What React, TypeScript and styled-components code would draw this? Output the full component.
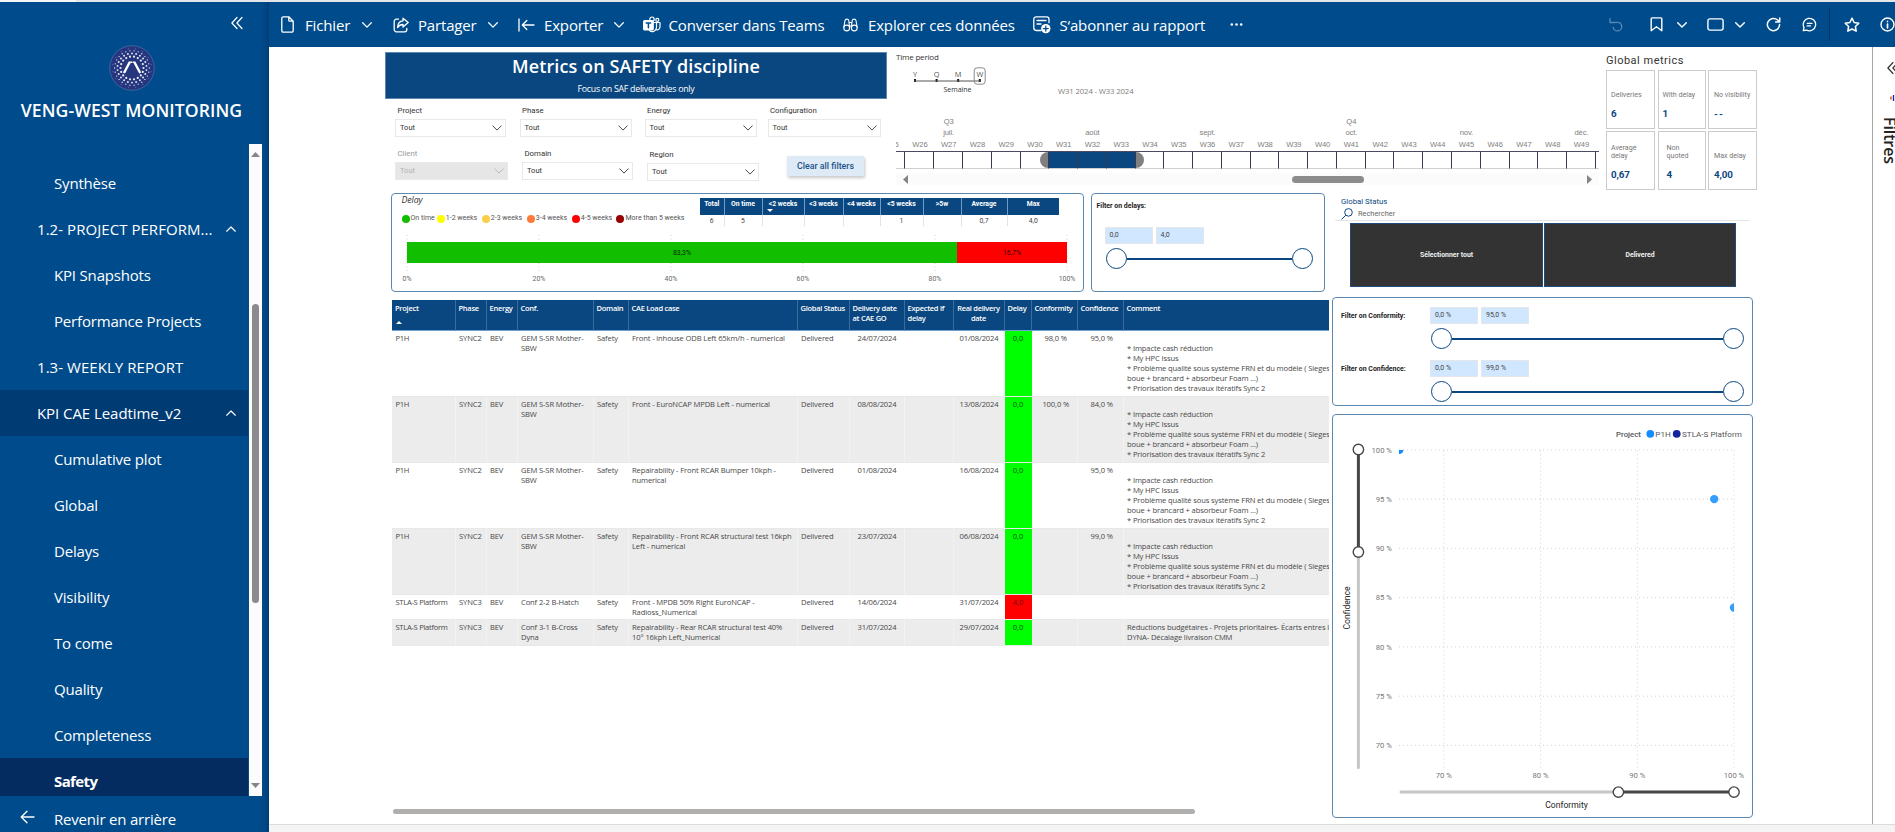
import React from "react";
import styled, { createGlobalStyle, css } from "styled-components";

const NAVY = "#0a4780";
const BRAND = "#004b8b";
const UI = '"Open Sans", "Noto Sans", sans-serif';
const DIN = 'Roboto, "Liberation Sans", sans-serif';

const GlobalStyle = createGlobalStyle`
  * { box-sizing: border-box; }
  html, body { margin: 0; padding: 0; background: #fff; overflow: hidden; }
  body { font-family: ${UI}; color: #333; }
`;

/* ---------- Page frame ---------- */

const Page = styled.div`
  width: 1895px;
  height: 832px;
  display: flex;
  flex-direction: column;
  overflow: hidden;
`;
const BrowserEdge = styled.div`
  height: 2px;
  flex: none;
  background: linear-gradient(90deg, #f4f5f7 76px, #e4e6ea 76px);
`;
const Shell = styled.div`
  flex: 1;
  min-height: 0;
  display: flex;
`;
const Main = styled.div`
  flex: 1;
  min-width: 0;
  display: flex;
  flex-direction: column;
`;
const Workspace = styled.div`
  flex: 1;
  min-height: 0;
  display: flex;
`;
const StatusBar = styled.div`
  height: 8px;
  flex: none;
  background: #f4f4f4;
  border-top: 1px solid #dcdcdc;
`;

/* ---------- Sidebar ---------- */

const Sidebar = styled.aside`
  width: 269px;
  flex: none;
  display: flex;
  flex-direction: column;
  background: ${BRAND};
  color: #fff;
  box-shadow: inset -6px 0 5px -4px rgba(0, 25, 70, 0.35);
`;
const CollapseRow = styled.div`
  height: 43px;
  padding: 14px 26px 0 0;
  display: flex;
  justify-content: flex-end;
`;
const LogoRow = styled.div`
  width: 263px;
  height: 46px;
  display: flex;
  justify-content: center;
`;
const AppTitle = styled.div`
  width: 263px;
  height: 53px;
  padding-top: 7px;
  text-align: center;
  font-weight: 600;
  font-size: 17.6px;
  line-height: 24px;
  letter-spacing: 0.08px;
  white-space: nowrap;
`;
const NavFrame = styled.div`
  height: 652px;
  width: 262px;
  display: flex;
  flex: none;
`;
const NavList = styled.nav`
  width: 248px;
  margin-right: 1px;
  padding-top: 16px;
  overflow: hidden;
`;
const NavItem = styled.div<{ $level: 1 | 2; $state?: "open" | "active" }>`
  height: 46px;
  display: flex;
  align-items: center;
  justify-content: space-between;
  padding: 0 12px 0 ${(p) => (p.$level === 1 ? 37 : 54)}px;
  font-size: 15px;
  letter-spacing: ${(p) => (p.$level === 1 ? 0.05 : -0.18)}px;
  white-space: nowrap;
  ${(p) =>
    p.$state === "open" &&
    css`
      background: #003b74;
      letter-spacing: -0.06px;
    `}
  ${(p) =>
    p.$state === "active" &&
    css`
      background: #042c60;
      font-weight: 700;
      letter-spacing: -0.6px;
    `}
`;
const NavScroll = styled.div`
  width: 13px;
  background: #fcfcfc;
  display: flex;
  flex-direction: column;
  align-items: center;
  padding: 8px 0;
`;
const NavThumb = styled.div`
  width: 7px;
  height: 299px;
  margin: 143px 0 auto;
  border-radius: 4px;
  background: #8b8b8b;
`;
const BackRow = styled.div`
  flex: 1;
  display: flex;
  align-items: flex-start;
  padding: 9px 0 0 20px;
  font-size: 15px;
  line-height: 28px;
  letter-spacing: -0.2px;
  white-space: nowrap;
  overflow: hidden;
  svg { margin: 5px 19px 0 0; }
`;

/* ---------- Toolbar ---------- */

const Toolbar = styled.header`
  height: 45px;
  flex: none;
  display: flex;
  align-items: center;
  background: ${BRAND};
  color: #fff;
  svg { flex: none; }
`;
const Command = styled.div<{ $gap: number }>`
  display: flex;
  align-items: center;
  margin-left: ${(p) => p.$gap}px;
`;
const CommandLabel = styled.span<{ $w: number; $before: number }>`
  width: ${(p) => p.$w}px;
  margin-left: ${(p) => p.$before}px;
  font-size: 15px;
  line-height: 22px;
  letter-spacing: -0.16px;
  white-space: nowrap;
`;
const Divider = styled.div`
  width: 1px;
  height: 33px;
  margin: 0 14px 0 12px;
  background: #043566;
`;

/* ---------- Report canvas ---------- */

const Canvas = styled.div`
  width: 1603px;
  flex: none;
  padding: 5px 0 0 116px;
  background: #fff;
`;
const TopBand = styled.div`
  height: 141px;
  display: flex;
`;
const FilterBlock = styled.section`
  width: 502px;
`;
const Banner = styled.div`
  height: 47px;
  background: ${NAVY};
  border: 1px solid #5c86ab;
  color: #fff;
  text-align: center;
`;
const BannerTitle = styled.h1`
  margin: 0;
  padding-top: 1px;
  font-size: 18px;
  line-height: 24px;
  font-weight: 600;
  letter-spacing: 0.09px;
`;
const BannerSub = styled.div`
  margin-top: 4px;
  font-size: 8.8px;
  line-height: 14px;
  letter-spacing: -0.27px;
  font-weight: 500;
`;
const SlicerRow = styled.div<{ $top: number; $left: number }>`
  display: flex;
  align-items: flex-start;
  padding: ${(p) => p.$top}px 0 0 ${(p) => p.$left}px;
`;
const Slicer = styled.div<{ $w: number; $gap: number; $drop?: number; $off?: boolean }>`
  width: ${(p) => p.$w}px;
  margin: ${(p) => p.$drop || 0}px ${(p) => p.$gap}px 0 0;
  font-family: ${DIN};
  color: ${(p) => (p.$off ? "#9a9a9a" : "#333")};
`;
const SlicerLabel = styled.div`
  padding-left: 2.5px;
  height: 14px;
  font-size: 7.8px;
  line-height: 11px;
`;
const SlicerBox = styled.div<{ $off?: boolean }>`
  height: 18px;
  display: flex;
  align-items: center;
  justify-content: space-between;
  padding: 0 3px 1px 4px;
  border: 1px solid #e9e9e9;
  background: ${(p) => (p.$off ? "#e6e6e6" : "#fff")};
  color: ${(p) => (p.$off ? "#b4b4b4" : "#333")};
  font-size: 7.5px;
`;
const ClearButton = styled.button`
  width: 77px;
  height: 20px;
  margin: 7.5px 0 0 4px;
  padding: 0;
  border: 0;
  background: #deebf7;
  box-shadow: 1px 2px 3px rgba(0, 0, 0, 0.22);
  color: #1c5288;
  font: 500 8.8px ${DIN};
  line-height: 18px;
`;

/* ---------- Timeline ---------- */

const Timeline = styled.section`
  width: 703px;
  margin-left: 9px;
  overflow: hidden;
`;
const TimelineTitle = styled.div`
  height: 14px;
  font-size: 8px;
  line-height: 9px;
  letter-spacing: -0.2px;
`;
const TimelineHead = styled.div`
  height: 49.5px;
  display: flex;
`;
const Granularity = styled.div`
  width: 74px;
  margin-left: 16px;
`;
const RangeText = styled.div`
  margin-left: 72px;
  padding-top: 19px;
  font-size: 7.8px;
  line-height: 12px;
  letter-spacing: -0.16px;
  color: #808080;
`;
const Weeks = styled.div`
  display: flex;
  margin-left: -19.3px;
`;
const Week = styled.div`
  width: 28.77px;
  flex: none;
  font-family: "Liberation Sans", sans-serif;
  font-size: 7.6px;
  line-height: 12.2px;
  text-align: center;
  color: #808080;
  letter-spacing: -0.1px;
`;
const WeekTier = styled.div`
  height: 11.7px;
`;
const WeekCell = styled.div<{ $on: boolean }>`
  height: 18px;
  border-top: 1.5px solid #4c4a60;
  border-bottom: 1px solid #cfcfd4;
  border-right: 1px solid #3b394f;
  background: ${(p) => (p.$on ? NAVY : "#fff")};
  display: flex;
`;
const RangeHandle = styled.span<{ $side: "start" | "end" }>`
  width: 8.5px;
  height: 16px;
  background: #808080;
  margin-left: ${(p) => (p.$side === "start" ? "auto" : "0")};
  border-radius: ${(p) => (p.$side === "start" ? "9px 0 0 9px" : "0 9px 9px 0")};
`;
const TimeScroll = styled.div`
  height: 12px;
  margin-top: 4.5px;
  padding: 0 7px;
  display: flex;
  align-items: center;
  background: #fbfbfb;
`;
const TimeThumb = styled.div`
  width: 72px;
  height: 7px;
  margin: 0 auto 0 380px;
  border-radius: 4px;
  background: #8c8c8c;
`;

/* ---------- Global metrics ---------- */

const Metrics = styled.section`
  width: 152px;
  margin-left: 7px;
  font-family: ${DIN};
`;
const MetricsTitle = styled.div`
  height: 18px;
  font-size: 11px;
  line-height: 17px;
  letter-spacing: 0.5px;
`;
const MetricGrid = styled.div`
  display: grid;
  grid-template-columns: 49px 48px 49px;
  grid-auto-rows: 59px;
  gap: 2px 2.5px;
`;
const MetricCard = styled.div<{ $left?: number }>`
  display: flex;
  flex-direction: column;
  justify-content: flex-end;
  padding: 0 0 8px ${(p) => p.$left ?? 4}px;
  border: 1px solid #cbcbcb;
  font-size: 7.1px;
  line-height: 8px;
  color: #777;
  white-space: nowrap;
`;
const MetricLabel = styled.span`
  white-space: pre;
`;
const MetricValue = styled.div<{ $empty: boolean }>`
  margin-top: 9px;
  font-size: 9.8px;
  line-height: 12px;
  font-weight: 700;
  letter-spacing: ${(p) => (p.$empty ? 1.2 : -0.1)}px;
  color: ${NAVY};
`;

/* ---------- Body ---------- */

const Body = styled.div`
  display: flex;
  margin-left: 6px;
`;
const LeftColumn = styled.div`
  width: 938px;
`;
const PanelRow = styled.div`
  display: flex;
  gap: 7px;
  margin-bottom: 8px;
`;
const Panel = styled.section<{ $w: number; $h: number }>`
  width: ${(p) => p.$w}px;
  height: ${(p) => p.$h}px;
  flex: none;
  border: 1px solid #5b88b3;
  border-radius: 4px;
  background: #fff;
  font-family: ${DIN};
`;
const DelayHead = styled.div`
  height: 38px;
  display: flex;
`;
const DelayInfo = styled.div`
  width: 308px;
  padding-left: 9.5px;
`;
const DelayTitle = styled.div`
  height: 18px;
  padding-top: 1px;
  font-size: 8.8px;
  line-height: 10px;
  font-style: italic;
  font-family: ${UI};
  letter-spacing: -0.1px;
`;
const Legend = styled.div`
  display: flex;
`;
const LegendItem = styled.span<{ $w: number; $c: string }>`
  width: ${(p) => p.$w}px;
  display: flex;
  align-items: center;
  gap: 1px;
  font-size: 7px;
  line-height: 13px;
  color: #555;
  white-space: nowrap;
  &::before {
    content: "";
    width: 8px;
    height: 8px;
    flex: none;
    border-radius: 50%;
    background: ${(p) => p.$c};
  }
`;
const SummaryTable = styled.table`
  width: 359px;
  height: 27px;
  margin-top: 4px;
  border-collapse: collapse;
  table-layout: fixed;
  font-size: 6.8px;
  line-height: 9px;
  text-align: center;
  th {
    height: 17px;
    padding: 1.5px 0 0;
    vertical-align: top;
    background: ${NAVY};
    color: #fff;
    font-weight: 700;
    border-right: 1px solid #6f9cc7;
  }
  td {
    height: 10px;
    padding: 2px 0 0;
    border-right: 1px solid #e3e3e3;
    color: #444;
  }
  th:last-child, td:last-child { border-right: 0; }
`;
const SortedHeader = styled.span`
  display: block;
  position: relative;
  &::after {
    content: "";
    position: absolute;
    left: 4px;
    top: 9px;
    border: 3px solid transparent;
    border-top-color: #fff;
    border-bottom: 0;
  }
`;
const SliderTitle = styled.div`
  font-size: 6.95px;
  line-height: 11px;
  font-weight: 700;
  color: #222;
  white-space: nowrap;
`;
const InputPair = styled.div`
  display: flex;
  gap: 3px;
`;
const RangeInput = styled.div`
  width: 48px;
  height: 17px;
  padding-left: 4px;
  border: 1px solid #e3e6ea;
  background: #d0e7ff;
  color: #444;
  font-size: 7px;
  line-height: 15px;
`;
const Track = styled.div<{ $w: number }>`
  width: ${(p) => p.$w}px;
  height: 19px;
  display: flex;
  align-items: center;
  &::before, &::after {
    content: "";
    width: 19px;
    height: 19px;
    border: 1.5px solid ${NAVY};
    border-radius: 50%;
    background: #fff;
  }
`;
const TrackLine = styled.div`
  flex: 1;
  height: 2px;
  background: ${NAVY};
`;
const DelaySlicer = styled.div`
  padding: 7px 0 0 4.5px;
`;
const DelayControls = styled.div`
  padding: 15px 0 0 8px;
  display: flex;
  flex-direction: column;
  gap: 5px;
  ${Track} { margin-left: 1px; }
`;
const RatioSlicer = styled.div<{ $top: number }>`
  display: flex;
  padding: ${(p) => p.$top}px 0 0 8px;
`;
const RatioName = styled.div`
  width: 89px;
  padding-top: 4px;
`;
const RatioControls = styled.div`
  display: flex;
  flex-direction: column;
  gap: 5px;
  ${Track} { margin-left: 1px; }
`;

/* ---------- Table ---------- */

const TableFrame = styled.div`
  width: 937px;
  height: 509px;
  margin-left: 1px;
  overflow: hidden;
`;
const DataTable = styled.table`
  width: 1020px;
  border-collapse: separate;
  border-spacing: 0;
  table-layout: fixed;
  font-size: 7.6px;
  line-height: 10.1px;
  letter-spacing: -0.13px;
  color: #484848;
`;
const HeadCell = styled.th<{ $align?: string }>`
  height: 31px;
  padding: 3px 3px 0;
  vertical-align: top;
  text-align: ${(p) => p.$align || "left"};
  background: ${NAVY};
  color: #fff;
  font-weight: 600;
  font-size: 7.5px;
  letter-spacing: -0.28px;
  border-right: 1px solid #3c6c9b;
  border-bottom: 1px solid #6fa3d4;
  white-space: pre-line;
`;
const SortUp = styled.span`
  display: block;
  width: 0;
  margin: 8px 0 0 1px;
  border: 3px solid transparent;
  border-bottom-color: #fff;
  border-top: 0;
`;
const Row = styled.tr<{ $h: number; $alt: boolean }>`
  height: ${(p) => p.$h}px;
  background: ${(p) => (p.$alt ? "#ececec" : "#fff")};
`;
const Cell = styled.td<{ $align?: string; $fill?: string; $right?: number; $tight?: boolean }>`
  padding: 2px ${(p) => p.$right ?? 0}px 0 3.5px;
  vertical-align: top;
  text-align: ${(p) => p.$align || "left"};
  white-space: pre;
  border-right: 1px solid rgba(255, 255, 255, 0.35);
  border-bottom: 1px solid #e8e8e8;
  ${(p) =>
    p.$tight &&
    css`
      letter-spacing: -0.29px;
    `}
  ${(p) =>
    p.$fill &&
    css`
      background: ${p.$fill};
      color: ${p.$fill === "#ff0000" ? "#6e0808" : "#0a500a"};
      border-right: 0;
    `}
`;
const TableThumb = styled.div`
  width: 802px;
  height: 5px;
  margin-left: 2px;
  border-radius: 3px;
  background: #b0afad;
`;

/* ---------- Right column ---------- */

const RightColumn = styled.div`
  width: 421px;
  margin-left: 3px;
`;
const StatusSlicer = styled.section`
  height: 104px;
  padding: 3px 0 0 3px;
  font-family: ${DIN};
`;
const StatusTitle = styled.div`
  padding-left: 6px;
  font-size: 7.8px;
  line-height: 11px;
  color: ${NAVY};
`;
const SearchRow = styled.div`
  width: 415px;
  height: 14px;
  display: flex;
  align-items: center;
  gap: 5px;
  padding-left: 6px;
  border-bottom: 1px solid #e6e6e6;
  font-size: 7.4px;
  color: #666;
`;
const StatusTiles = styled.div`
  display: grid;
  grid-template-columns: 193px 192px;
  gap: 1px;
  margin: 2px 0 0 15px;
`;
const StatusTile = styled.div`
  height: 64px;
  display: flex;
  align-items: center;
  justify-content: center;
  background: #333;
  border: 1px solid #1d4c7d;
  color: #f0f0f0;
  font-size: 6.9px;
  font-weight: 700;
`;
const Stack = styled.div`
  display: flex;
  flex-direction: column;
  gap: 8px;
`;

/* ---------- Collapsed filter pane ---------- */

const FilterPane = styled.aside`
  width: 23px;
  flex: none;
  overflow: hidden;
  border-left: 1px solid #a6a6a6;
  display: flex;
  flex-direction: column;
  align-items: flex-start;
  padding: 14px 0 0 14px;
  svg { flex: none; }
`;
const PaneIcon = styled.div`
  height: 10px;
  margin: 18px 0 14px;
  display: flex;
`;
const PaneTitle = styled.div`
  margin-left: -8px;
  writing-mode: vertical-rl;
  font-size: 16px;
  line-height: 22px;
  font-weight: 600;
  color: #252423;
  letter-spacing: -0.1px;
`;

/* ---------- Icons ---------- */

type IconProps = { w?: number; h?: number; vb?: string; sw?: number; children: React.ReactNode; op?: number };
const Icon = ({ w = 16, h = 16, vb = "0 0 16 16", sw = 1.3, op = 1, children }: IconProps) => (
  <svg width={w} height={h} viewBox={vb} fill="none" stroke="currentColor" strokeWidth={sw} strokeLinecap="round" strokeLinejoin="round" opacity={op}>
    {children}
  </svg>
);
const Chevron = ({ up, w = 10, sw = 1.3 }: { up?: boolean; w?: number; sw?: number }) => (
  <Icon w={w} h={w * 0.6} vb="0 0 10 6" sw={sw}>
    <path d={up ? "M.7 5.2 5 1l4.3 4.2" : "M.7.8 5 5.1 9.3.8"} />
  </Icon>
);
const DoubleChevron = () => (
  <Icon w={12} h={14} vb="0 0 12 14" sw={1.2}>
    <path d="M6 1.5.9 7 6 12.5M11 1.5 5.9 7l5.1 5.5" />
  </Icon>
);
const Triangle = ({ d }: { d: string }) => (
  <svg width="9" height="9" viewBox="0 0 9 9"><path d={d} fill="#858585" /></svg>
);

const Logo = () => {
  const dots: React.ReactNode[] = [];
  [[11.5, 18, 1.1], [14.6, 22, 0.95], [17.3, 26, 0.65], [19.4, 16, 0.4]].forEach(([r, n, s], ring) => {
    for (let i = 0; i < n; i++) {
      const a = ((i + (ring % 2) / 2) / n) * Math.PI * 2;
      dots.push(<circle key={`${ring}-${i}`} cx={23 + r * Math.cos(a)} cy={23 + r * Math.sin(a)} r={s} />);
    }
  });
  return (
    <svg width="46" height="46" viewBox="0 0 46 46">
      <circle cx="23" cy="23" r="22.3" fill="#25367f" stroke="#4f74ae" strokeWidth=".7" />
      <g fill="#fff" opacity=".9">{dots}</g>
      <path d="M15 28 20.8 17M25.3 17 31.2 28" stroke="#fff" strokeWidth="2.4" />
      <path d="M20 17.2h3M23.5 17.2h2.4" stroke="#fff" strokeWidth="1.4" />
    </svg>
  );
};

/* ---------- Data ---------- */

const NAV: { label: string; level: 1 | 2; state?: "open" | "active"; arrow?: boolean }[] = [
  { label: "Synthèse", level: 2 },
  { label: "1.2- PROJECT PERFORM...", level: 1, arrow: true },
  { label: "KPI Snapshots", level: 2 },
  { label: "Performance Projects", level: 2 },
  { label: "1.3- WEEKLY REPORT", level: 1 },
  { label: "KPI CAE Leadtime_v2", level: 1, state: "open", arrow: true },
  { label: "Cumulative plot", level: 2 },
  { label: "Global", level: 2 },
  { label: "Delays", level: 2 },
  { label: "Visibility", level: 2 },
  { label: "To come", level: 2 },
  { label: "Quality", level: 2 },
  { label: "Completeness", level: 2 },
  { label: "Safety", level: 2, state: "active" },
];

const WEEKS = Array.from({ length: 26 }, (_, i) => 25 + i);
const MONTHS: Record<number, string> = { 27: "juil.", 32: "août", 36: "sept.", 41: "oct.", 45: "nov.", 49: "déc." };
const QUARTERS: Record<number, string> = { 27: "Q3", 41: "Q4" };

const LEGEND: [string, string, number][] = [
  ["On time", "#12be00", 35.3],
  ["1-2 weeks", "#ffff00", 45],
  ["2-3 weeks", "#fbcf4b", 45],
  ["3-4 weeks", "#ff7a3c", 45],
  ["4-5 weeks", "#ff0000", 44.7],
  ["More than 5 weeks", "#960000", 70],
];

const SUMMARY: [string, string, number][] = [
  ["Total", "6", 24],
  ["On time", "5", 38],
  ["<2 weeks", "", 42],
  ["<3 weeks", "", 39],
  ["<4 weeks", "", 37],
  ["<5 weeks", "1", 43],
  [">5w", "", 38],
  ["Average", "0,7", 46],
  ["Max", "4,0", 52],
];

const COLUMNS: { title: string; w: number; align?: string }[] = [
  { title: "Project", w: 63.5 },
  { title: "Phase", w: 31 },
  { title: "Energy", w: 31 },
  { title: "Conf.", w: 76 },
  { title: "Domain", w: 35 },
  { title: "CAE Load case", w: 169 },
  { title: "Global Status", w: 52 },
  { title: "Delivery date\nat CAE GO", w: 55 },
  { title: "Expected if\ndelay", w: 49 },
  { title: "Real delivery\ndate", w: 51, align: "center" },
  { title: "Delay", w: 27 },
  { title: "Conformity", w: 46 },
  { title: "Confidence", w: 46 },
  { title: "Comment", w: 288.5 },
];

const LONG_COMMENT =
  "\n* Impacte cash réduction\n* My HPC Issus\n* Problème qualité sous système FRN et du modèle ( Sieges\nboue + brancard + absorbeur Foam ...)\n* Priorisation des travaux itératifs Sync 2";

const ROWS = [
  { h: 65.5, v: ["P1H", "SYNC2", "BEV", "GEM S-SR Mother-\nSBW", "Safety", "Front - inhouse ODB Left 65km/h - numerical", "Delivered", "24/07/2024", "", "01/08/2024", "0,0", "98,0 %", "95,0 %", LONG_COMMENT] },
  { h: 66.5, v: ["P1H", "SYNC2", "BEV", "GEM S-SR Mother-\nSBW", "Safety", "Front - EuroNCAP MPDB Left - numerical", "Delivered", "08/08/2024", "", "13/08/2024", "0,0", "100,0 %", "84,0 %", LONG_COMMENT] },
  { h: 65.5, v: ["P1H", "SYNC2", "BEV", "GEM S-SR Mother-\nSBW", "Safety", "Repairability - Front RCAR Bumper 10kph -\nnumerical", "Delivered", "01/08/2024", "", "16/08/2024", "0,0", "", "95,0 %", LONG_COMMENT] },
  { h: 66.5, v: ["P1H", "SYNC2", "BEV", "GEM S-SR Mother-\nSBW", "Safety", "Repairability - Front RCAR structural test 16kph\nLeft - numerical", "Delivered", "23/07/2024", "", "06/08/2024", "0,0", "", "99,0 %", LONG_COMMENT] },
  { h: 25, v: ["STLA-S Platform", "SYNC3", "BEV", "Conf 2-2 B-Hatch", "Safety", "Front - MPDB 50% Right EuroNCAP -\nRadioss_Numerical", "Delivered", "14/06/2024", "", "31/07/2024", "4,0", "", "", ""] },
  { h: 25.5, v: ["STLA-S Platform", "SYNC3", "BEV", "Conf 3-1 B-Cross\nDyna", "Safety", "Repairability - Rear RCAR structural test 40%\n10° 16kph Left_Numerical", "Delivered", "31/07/2024", "", "29/07/2024", "0,0", "", "", "Réductions budgétaires - Projets prioritaires- Écarts entres les\nDYNA- Décalage livraison CMM"] },
];

/* ---------- Charts ---------- */

const DelayBar = () => (
  <svg width="690" height="58" viewBox="392 232 690 58" fontFamily="Roboto, sans-serif" fontSize="6.9" textAnchor="middle">
    {[0, 20, 40, 60, 80, 100].map((v) => {
      const x = 407 + v * 6.6;
      return (
        <g key={v}>
          <path d={`M${x} 235V272`} stroke="#cfcfcf" strokeDasharray="1 2.5" />
          <text x={x} y="281" fill="#666">{v}%</text>
        </g>
      );
    })}
    <rect x="407" y="242" width="550" height="21" fill="#12be00" />
    <rect x="957" y="242" width="110" height="21" fill="#ff0000" />
    <text x="682" y="255" fill="#062605">83,3%</text>
    <text x="1012" y="255" fill="#3a0303">16,7%</text>
  </svg>
);

const Scatter = () => (
  <svg width="419" height="402" viewBox="1333 414.5 419 402" fontFamily="Roboto, sans-serif" fontSize="7.7" fill="#777">
    <g fontSize="8.1" fill="#555">
      <text x="1616" y="436" fontWeight="500" fontSize="7.8">Project</text>
      <circle cx="1650.3" cy="433.3" r="3.9" fill="#118dff" />
      <text x="1655.3" y="436">P1H</text>
      <circle cx="1676.7" cy="433.3" r="3.9" fill="#12239e" />
      <text x="1682" y="436">STLA-S Platform</text>
    </g>
    {[100, 95, 90, 85, 80, 75, 70].map((v, i) => {
      const y = 449.4 + i * 49.25;
      return (
        <g key={v}>
          <path d={`M1399 ${y}H1734`} stroke="#d2d2d2" strokeDasharray="1 3" />
          <text x="1392" y={y + 2.6} textAnchor="end">{v} %</text>
        </g>
      );
    })}
    {[70, 80, 90, 100].map((v, i) => {
      const x = 1443.9 + i * 96.7;
      return (
        <g key={v}>
          <path d={`M${x} 450V768`} stroke="#d2d2d2" strokeDasharray="1 3" />
          <text x={x} y="777.6" textAnchor="middle">{v} %</text>
        </g>
      );
    })}
    <g fill="#118dff">
      <path d="M1399 449.4h4.400a4.200 4.200 0 0 1-4.400 4.200z" />
      <circle cx="1714.200" cy="498.600" r="4.200" opacity=".85" />
      <path d="M1734 602.900a4.200 4.200 0 0 0 0 8.400z" opacity=".85" />
    </g>
    <g fill="none" strokeLinecap="round" strokeWidth="3">
      <path d="M1358.400 552V767" stroke="#c8c6c4" />
      <path d="M1358.400 449V552" stroke="#484644" />
      <path d="M1401 791.600H1618" stroke="#c8c6c4" />
      <path d="M1618 791.600H1734" stroke="#484644" />
    </g>
    <g fill="#fff" stroke="#484644" strokeWidth="1.400">
      <circle cx="1358.400" cy="449" r="5.200" />
      <circle cx="1358.400" cy="551.500" r="5.200" />
      <circle cx="1618.400" cy="791.600" r="5.200" />
      <circle cx="1734" cy="791.600" r="5.200" />
    </g>
    <g fill="#252423" fontSize="8.600" textAnchor="middle">
      <text x="1566.500" y="807.600">Conformity</text>
      <text transform="translate(1350 607.500) rotate(-90)">Confidence</text>
    </g>
  </svg>
);

const GranularityScale = () => (
  <svg width="74" height="32" viewBox="912 66 74 32" fontFamily="Open Sans, sans-serif" fontSize="7.400" fill="#555" textAnchor="middle">
    {["Y", "Q", "M", "W"].map((c, i) => (
      <g key={c}>
        <text x={915 + i * 21.6} y="77.400">{c}</text>
        <rect x={914 + i * 21.6} y="79" width="2" height="3" fill="#111" />
      </g>
    ))}
    <path d="M914 81H980" stroke="#555" />
    <rect x="974.200" y="67.800" width="11" height="16.400" rx="3" fill="none" stroke="#8a8a8a" />
    <text x="957.500" y="92" fontSize="7" fill="#333">Semaine</text>
  </svg>
);

const slicer = (label: string, w: number, gap: number, drop = 0, off = false) => (
  <Slicer $w={w} $gap={gap} $drop={drop} $off={off} key={label}>
    <SlicerLabel>{label}</SlicerLabel>
    <SlicerBox $off={off}>
      Tout
      <Chevron w={10} sw={0.9} />
    </SlicerBox>
  </Slicer>
);

const metric = (label: string, value: string, left = 4) => (
  <MetricCard $left={left} key={label}>
    <MetricLabel>{label}</MetricLabel>
    <MetricValue $empty={value === "--"}>{value}</MetricValue>
  </MetricCard>
);

export default function App() {
  return (
    <Page>
      <GlobalStyle />
      <BrowserEdge />
      <Shell>
        <Sidebar>
          <CollapseRow><DoubleChevron /></CollapseRow>
          <LogoRow><Logo /></LogoRow>
          <AppTitle>VENG-WEST MONITORING</AppTitle>
          <NavFrame>
            <NavList>
              {NAV.map((n) => (
                <NavItem key={n.label} $level={n.level} $state={n.state}>
                  {n.label}
                  {n.arrow && <Chevron up w={10} sw={1.2} />}
                </NavItem>
              ))}
            </NavList>
            <NavScroll>
              <Triangle d="M0 5 4.5 0 9 5z" />
              <NavThumb />
              <Triangle d="M0 4h9L4.5 9z" />
            </NavScroll>
          </NavFrame>
          <BackRow>
            <Icon w={15} h={14} vb="0 0 15 14"><path d="M7 1.2 1.2 7 7 12.8M1.5 7H14" /></Icon>
            Revenir en arrière
          </BackRow>
        </Sidebar>

        <Main>
          <Toolbar>
            <Command $gap={12}>
              <Icon w={13} h={17} vb="0 0 13 17"><path d="M2.2.8h5.6l4.4 4.4v9.6a1.4 1.4 0 0 1-1.4 1.4H2.2A1.4 1.4 0 0 1 .8 14.8V2.2A1.4 1.4 0 0 1 2.2.8zM7.8.8v3.4a1 1 0 0 0 1 1h3.400" /></Icon>
              <CommandLabel $w={57} $before={11}>Fichier</CommandLabel>
              <Chevron />
            </Command>
            <Command $gap={20.5}>
              <Icon w={16} h={16}>
                <path d="M5.5 2.2H3.4A2.2 2.2 0 0 0 1.2 4.4v8.2a2.2 2.2 0 0 0 2.2 2.2h8.2a2.2 2.2 0 0 0 2.2-2.200v-1.300" />
                <path d="M10 1.2 15.2 5.6 10 10V7.5C7.5 7.4 6 8.4 4.5 10.5 4.7 6.5 6.5 4 10 3.800z" />
              </Icon>
              <CommandLabel $w={69.5} $before={9.5}>Partager</CommandLabel>
              <Chevron />
            </Command>
            <Command $gap={20.5}>
              <Icon w={17} h={14} vb="0 0 17 14"><path d="M1 1v12M8.8 2.5 4.3 7l4.5 4.5M4.5 7H16" /></Icon>
              <CommandLabel $w={69.5} $before={9}>Exporter</CommandLabel>
              <Chevron />
            </Command>
            <Command $gap={19}>
              <Icon w={18} h={17} vb="0 0 18 17" sw={1.2}>
                <circle cx="9" cy="3.2" r="2.2" /><circle cx="14.3" cy="3.9" r="1.5" />
                <path d="M12 6.5h5v4.3a3 3 0 0 1-3.4 3M6.5 14.5c2.8 2.6 7 .5 7-3.2V6.5H11" />
                <rect x=".6" y="4.5" width="9.6" height="9.4" rx="1" fill="currentColor" />
                <path d="M3.2 7h4.4M5.4 7v4.8" stroke={BRAND} strokeWidth="1.5" />
              </Icon>
              <CommandLabel $w={154} $before={8}>Converser dans Teams</CommandLabel>
            </Command>
            <Command $gap={20}>
              <Icon w={15} h={15} vb="0 0 15 15" sw={1.1}>
                <circle cx="3.7" cy="11" r="2.9" /><circle cx="11.3" cy="11" r="2.9" />
                <path d="M.9 10 2 3.5C2.3 1.7 5.5 1.7 5.8 3.5L6.6 10.5M14.1 10 13 3.5C12.7 1.7 9.5 1.7 9.2 3.5L8.4 10.5M6 5.5h3M6.500 9h2" />
              </Icon>
              <CommandLabel $w={147} $before={10.5}>Explorer ces données</CommandLabel>
            </Command>
            <Command $gap={17.5}>
              <Icon w={18} h={18} vb="0 0 18 18">
                <path d="M8 14.5H3.2A2.4 2.4 0 0 1 .8 12.1V3.2A2.4 2.4 0 0 1 3.2.8h10.4A2.4 2.4 0 0 1 16 3.2v3.5M4 4.5h9M4 8h4" />
                <circle cx="12.8" cy="12.6" r="4.7" fill="currentColor" stroke="none" />
                <path d="M12.8 10.2V15M10.4 12.6h4.8" stroke={BRAND} />
              </Icon>
              <CommandLabel $w={147} $before={9}>S‘abonner au rapport</CommandLabel>
            </Command>
            <Command $gap={23}>
              <Icon w={13} h={3} vb="0 0 13 3" sw={0}>
                <g fill="currentColor"><circle cx="1.8" cy="1.5" r="1.3" /><circle cx="6.5" cy="1.5" r="1.3" /><circle cx="11.2" cy="1.5" r="1.3" /></g>
              </Icon>
            </Command>
            <Command $gap={366}>
              <Icon w={14} h={15} vb="0 0 14 15" op={0.35}><path d="M1 1.5v4h4.5M1.2 5.3h7.3a4.3 4.3 0 1 1-4.3 5" /></Icon>
            </Command>
            <Command $gap={27}>
              <Icon w={13} h={15} vb="0 0 13 15" sw={1.4}><path d="M2 .9h9a.8.8 0 0 1 .8.8v12L6.5 9.8 1.2 13.7v-12A.8.8 0 0 1 2 .9z" /></Icon>
            </Command>
            <Command $gap={14}><Chevron w={10} sw={1.4} /></Command>
            <Command $gap={20}>
              <Icon w={17} h={13} vb="0 0 17 13" sw={1.4}><rect x=".9" y=".9" width="15.2" height="11.2" rx="2" /></Icon>
            </Command>
            <Command $gap={11}><Chevron w={10} sw={1.4} /></Command>
            <Command $gap={21}>
              <Icon w={15} h={15} vb="0 0 15 15" sw={1.5}><path d="M13.6 7.5a6.1 6.1 0 1 1-2-4.5l2 1.9M13.7 1v4H9.6" /></Icon>
            </Command>
            <Command $gap={21}>
              <Icon w={15} h={15} vb="0 0 15 15"><path d="M1.3 13.7 2 10.5a6.2 6.2 0 1 1 2.7 2.6zM5.2 6.3h4.8M5.2 8.9h3.3" /></Icon>
            </Command>
            <Divider />
            <Icon w={16} h={16} sw={1.5}><path d="m8 1.2 2.1 4.3 4.7.7-3.4 3.3.8 4.7L8 12l-4.2 2.2.8-4.7L1.2 6.2l4.7-.7z" /></Icon>
            <Command $gap={20.5}>
              <Icon w={15} h={15} vb="0 0 15 15" sw={1.4}><circle cx="7.5" cy="7.5" r="6.5" /><path d="M7.5 7v3.8M7.5 4.4v.2" strokeWidth="1.7" /></Icon>
            </Command>
          </Toolbar>

          <Workspace>
            <Canvas>
              <TopBand>
                <FilterBlock>
                  <Banner>
                    <BannerTitle>Metrics on SAFETY discipline</BannerTitle>
                    <BannerSub>Focus on SAF deliverables only</BannerSub>
                  </Banner>
                  <SlicerRow $top={6} $left={10}>
                    {slicer("Project", 111, 13.5)}
                    {slicer("Phase", 112, 13)}
                    {slicer("Energy", 112, 11)}
                    {slicer("Configuration", 113, 0)}
                  </SlicerRow>
                  <SlicerRow $top={11} $left={10}>
                    {slicer("Client", 113, 14, 0, true)}
                    {slicer("Domain", 111, 14)}
                    {slicer("Region", 112, 24, 1)}
                    <ClearButton>Clear all filters</ClearButton>
                  </SlicerRow>
                </FilterBlock>

                <Timeline>
                  <TimelineTitle>Time period</TimelineTitle>
                  <TimelineHead>
                    <Granularity><GranularityScale /></Granularity>
                    <RangeText>W31 2024 - W33 2024</RangeText>
                  </TimelineHead>
                  <Weeks>
                    {WEEKS.map((w) => (
                      <Week key={w}>
                        <WeekTier>{QUARTERS[w]}</WeekTier>
                        <WeekTier>{MONTHS[w]}</WeekTier>
                        <WeekTier>{w < 50 && `W${w}`}</WeekTier>
                        <WeekCell $on={w >= 31 && w <= 33}>
                          {w === 30 && <RangeHandle $side="start" />}
                          {w === 34 && <RangeHandle $side="end" />}
                        </WeekCell>
                      </Week>
                    ))}
                  </Weeks>
                  <TimeScroll>
                    <Triangle d="M5 0v9L0 4.5z" />
                    <TimeThumb />
                    <Triangle d="M4 0v9l5-4.5z" />
                  </TimeScroll>
                </Timeline>

                <Metrics>
                  <MetricsTitle>Global metrics</MetricsTitle>
                  <MetricGrid>
                    {metric("Deliveries", "6")}
                    {metric("With delay", "1")}
                    {metric("No visibility", "--", 5)}
                    {metric("Average\ndelay", "0,67")}
                    {metric("Non\nquoted", "4", 8)}
                    {metric("Max delay", "4,00", 5)}
                  </MetricGrid>
                </Metrics>
              </TopBand>

              <Body>
                <LeftColumn>
                  <PanelRow>
                    <Panel $w={693} $h={99}>
                      <DelayHead>
                        <DelayInfo>
                          <DelayTitle>Delay</DelayTitle>
                          <Legend>
                            {LEGEND.map(([t, c, w]) => (
                              <LegendItem key={t} $c={c} $w={w}>{t}</LegendItem>
                            ))}
                          </Legend>
                        </DelayInfo>
                        <SummaryTable>
                          <colgroup>{SUMMARY.map(([t, , w]) => <col key={t} width={w} />)}</colgroup>
                          <thead>
                            <tr>{SUMMARY.map(([t]) => <th key={t}>{t === "<2 weeks" ? <SortedHeader>{t}</SortedHeader> : t}</th>)}</tr>
                          </thead>
                          <tbody><tr>{SUMMARY.map(([t, v]) => <td key={t}>{v}</td>)}</tr></tbody>
                        </SummaryTable>
                      </DelayHead>
                      <DelayBar />
                    </Panel>
                    <Panel $w={234} $h={99}>
                      <DelaySlicer>
                        <SliderTitle>Filter on delays:</SliderTitle>
                        <DelayControls>
                          <InputPair><RangeInput>0,0</RangeInput><RangeInput>4,0</RangeInput></InputPair>
                          <Track $w={207}><TrackLine /></Track>
                        </DelayControls>
                      </DelaySlicer>
                    </Panel>
                  </PanelRow>

                  <TableFrame>
                    <DataTable>
                      <colgroup>{COLUMNS.map((c) => <col key={c.title} style={{ width: c.w }} />)}</colgroup>
                      <thead>
                        <tr>
                          {COLUMNS.map((c, i) => (
                            <HeadCell key={c.title} $align={c.align}>{c.title}{i === 0 && <SortUp />}</HeadCell>
                          ))}
                        </tr>
                      </thead>
                      <tbody>
                        {ROWS.map((r, ri) => (
                          <Row key={ri} $h={r.h} $alt={ri % 2 === 1}>
                            {r.v.map((v, ci) => (
                              <Cell
                                key={ci}
                                $align={ci === 7 || ci === 9 ? "right" : ci >= 10 && ci <= 12 ? "center" : "left"}
                                $right={ci === 7 ? 7 : ci === 9 ? 5 : ci === 10 ? 3.5 : 0}
                                $fill={ci === 10 ? (v === "4,0" ? "#ff0000" : "#00ff00") : undefined}
                                $tight={ci === 0}
                              >
                                {v}
                              </Cell>
                            ))}
                          </Row>
                        ))}
                      </tbody>
                    </DataTable>
                  </TableFrame>
                  <TableThumb />
                </LeftColumn>

                <RightColumn>
                  <StatusSlicer>
                    <StatusTitle>Global Status</StatusTitle>
                    <SearchRow>
                      <svg width="12" height="12" viewBox="0 0 12 12" fill="none" stroke={NAVY} strokeWidth="1"><circle cx="7.5" cy="4.4" r="3.8" /><path d="M4.8 7.2.5 11.5" /></svg>
                      Rechercher
                    </SearchRow>
                    <StatusTiles>
                      <StatusTile>Sélectionner tout</StatusTile>
                      <StatusTile>Delivered</StatusTile>
                    </StatusTiles>
                  </StatusSlicer>
                  <Stack>
                    <Panel $w={421} $h={108.5}>
                      {[["Filter on Conformity:", "95,0 %", 9], ["Filter on Confidence:", "99,0 %", 12]].map(([t, hi, top]) => (
                        <RatioSlicer key={t} $top={top as number}>
                          <RatioName><SliderTitle>{t}</SliderTitle></RatioName>
                          <RatioControls>
                            <InputPair><RangeInput>0,0 %</RangeInput><RangeInput>{hi}</RangeInput></InputPair>
                            <Track $w={312.5}><TrackLine /></Track>
                          </RatioControls>
                        </RatioSlicer>
                      ))}
                    </Panel>
                    <Panel $w={421} $h={404}><Scatter /></Panel>
                  </Stack>
                </RightColumn>
              </Body>
            </Canvas>

            <FilterPane>
              <DoubleChevron />
              <PaneIcon>
                <svg width="10" height="10" viewBox="0 0 10 10">
                  <path d="M4 3.5v3" stroke="#d83b01" strokeWidth="1.3" /><path d="M6.5 2v6M9 0v10" stroke="#12239e" strokeWidth="1.3" />
                </svg>
              </PaneIcon>
              <PaneTitle>Filtres</PaneTitle>
            </FilterPane>
          </Workspace>
          <StatusBar />
        </Main>
      </Shell>
    </Page>
  );
}
